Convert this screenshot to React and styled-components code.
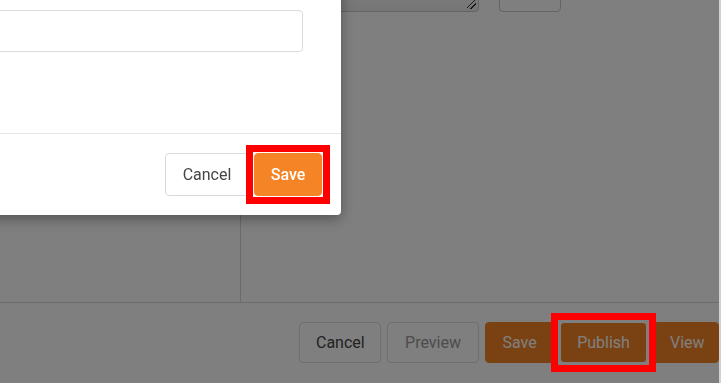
import React from 'react';
import styled, { createGlobalStyle } from 'styled-components';

const GlobalStyle = createGlobalStyle`
  html, body {
    margin: 0;
    padding: 0;
    height: 100%;
    overflow: hidden;
    background: #d2d2d2;
    font-family: Roboto, 'Liberation Sans', Arial, sans-serif;
  }
`;

const Page = styled.div`
  width: 719px;
  height: 383px;
  background: #fff;
  overflow: hidden;
  display: flex;
  flex-direction: column;
`;

const TopRow = styled.div`
  display: flex;
  gap: 20px;
  height: 40px;
  margin-top: -28px;
  padding-left: 250px;
  flex-shrink: 0;
`;

const TextArea = styled.div`
  position: relative;
  width: 229px;
  box-sizing: border-box;
  border: 1px solid #c8c8c8;
  border-radius: 4px;
  background: linear-gradient(#fff, #ececec);

  &::after {
    content: '';
    position: absolute;
    right: 2px;
    bottom: 2px;
    width: 9px;
    height: 9px;
    background: linear-gradient(
      135deg,
      transparent 40%,
      #333 40%,
      #333 48%,
      transparent 48%,
      transparent 66%,
      #333 66%,
      #333 74%,
      transparent 74%
    );
  }
`;

const SmallBox = styled.div`
  width: 62px;
  box-sizing: border-box;
  border: 1px solid #c8c8c8;
  border-radius: 4px;
`;

const Main = styled.div`
  display: flex;
  height: 290px;
  border-bottom: 1px solid #d6d6d6;
  flex-shrink: 0;
`;

const SidePanel = styled.div`
  width: 240px;
  border-right: 1px solid #d6d6d6;
`;

const Footer = styled.div`
  display: flex;
  justify-content: flex-end;
  gap: 6px;
  padding-top: 19px;
`;

const PageButton = styled.button`
  position: relative;
  height: 41px;
  padding: 0 16px;
  box-sizing: border-box;
  border-radius: 4px;
  font-family: Roboto, 'Liberation Sans', Arial, sans-serif;
  font-size: 16px;
  border: 1px solid ${(p) => (p.$primary ? (p.$focused ? '#ffffff' : '#f58426') : '#dcdcdc')};
  background: ${(p) => (p.$primary ? '#f58426' : '#fff')};
  color: ${(p) => (p.$primary ? '#fff' : p.$muted ? '#999' : '#444')};
  width: ${(p) => p.$width}px;
`;

const Overlay = styled.div`
  position: fixed;
  inset: 0;
  right: 2px;
  background: rgba(0, 0, 0, 0.5);
  z-index: 10;
`;

const Highlight = styled.span`
  position: absolute;
  inset: ${(p) => p.$inset}px;
  border: 7px solid #ff0000;
  z-index: 30;
  pointer-events: none;
`;

const Modal = styled.div`
  position: fixed;
  top: -60px;
  left: -259px;
  width: 600px;
  background: #fff;
  border-radius: 4px;
  box-shadow: 0 4px 14px rgba(0, 0, 0, 0.35);
  z-index: 20;
`;

const ModalBody = styled.div`
  padding: 70px 38px 81px 20px;
`;

const Input = styled.input`
  display: block;
  width: 100%;
  height: 42px;
  box-sizing: border-box;
  border: 1px solid #dcdcdc;
  border-radius: 4px;
`;

const ModalFooter = styled.div`
  display: flex;
  justify-content: flex-end;
  gap: 5px;
  padding: 19px;
  border-top: 1px solid #e6e6e6;
`;

const ModalButton = styled.button`
  position: relative;
  height: 43px;
  box-sizing: border-box;
  border-radius: 4px;
  font-family: Roboto, 'Liberation Sans', Arial, sans-serif;
  font-size: 16px;
  font-weight: ${(p) => (p.$primary ? 500 : 400)};
  border: 1px solid ${(p) => (p.$primary ? '#f58426' : '#d9d9d9')};
  background: ${(p) => (p.$primary ? '#f58426' : '#fff')};
  color: ${(p) => (p.$primary ? '#fff' : '#444')};
  width: ${(p) => p.$width}px;
`;

export default function App() {
  return (
    <>
      <GlobalStyle />
      <Page>
        <TopRow>
          <TextArea />
          <SmallBox />
        </TopRow>
        <Main>
          <SidePanel />
        </Main>
        <Footer>
          <PageButton $width={82}>Cancel</PageButton>
          <PageButton $width={92} $muted>Preview</PageButton>
          <PageButton $width={69} $primary>Save</PageButton>
          <PageButton $width={87} $primary $focused>
            Publish
            <Highlight $inset={-10} />
          </PageButton>
          <PageButton $width={66} $primary>View</PageButton>
        </Footer>
      </Page>
      <Overlay />
      <Modal>
        <ModalBody>
          <Input type="text" />
        </ModalBody>
        <ModalFooter>
          <ModalButton $width={84}>Cancel</ModalButton>
          <ModalButton $width={68} $primary>
            Save
            <Highlight $inset={-9} />
          </ModalButton>
        </ModalFooter>
      </Modal>
    </>
  );
}
